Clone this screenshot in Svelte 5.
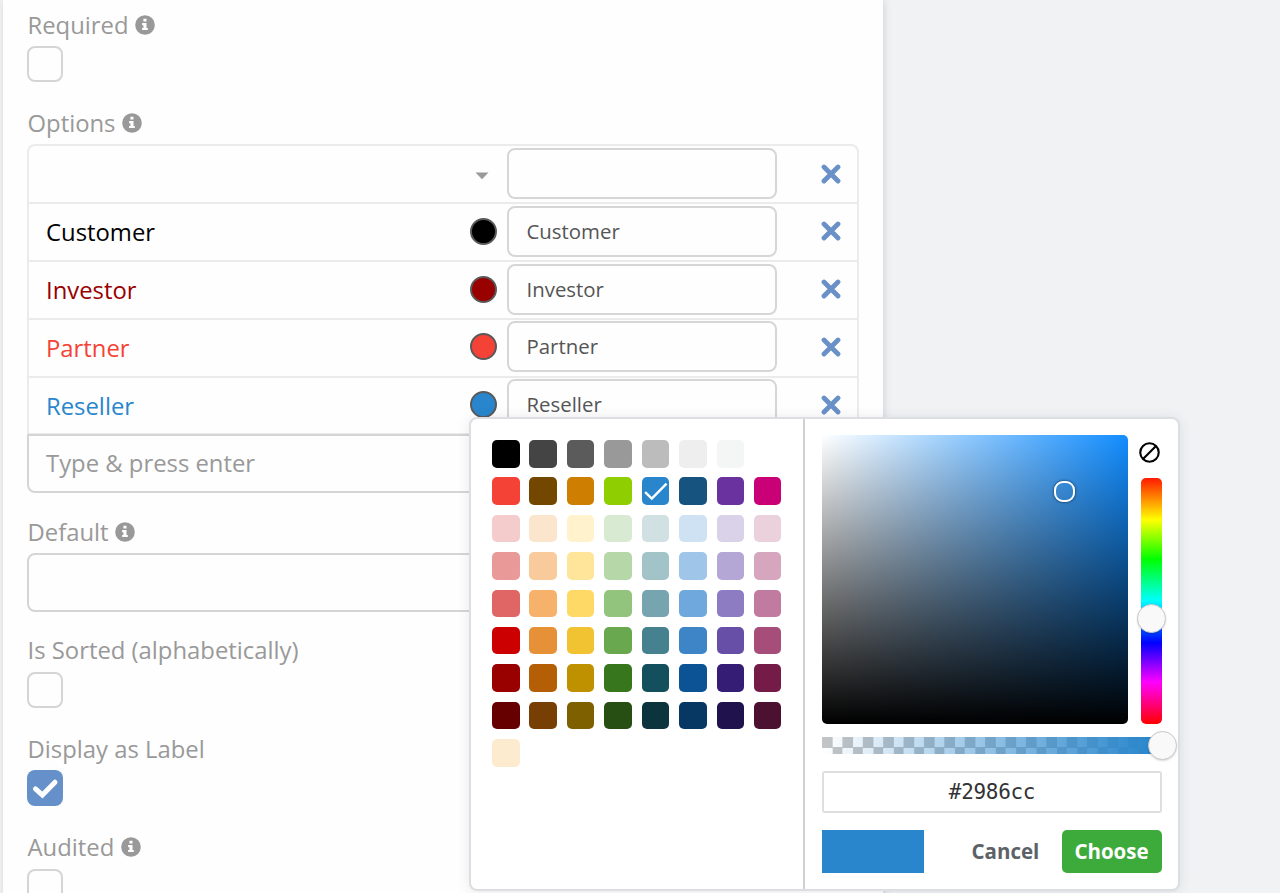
<script>
  const rows = [
    { name: 'Customer', color: '#000000' },
    { name: 'Investor', color: '#990000' },
    { name: 'Partner', color: '#f44336' },
    { name: 'Reseller', color: '#2986cc' }
  ];
  const palette = [
    '#000000', '#444444', '#5b5b5b', '#999999', '#bcbcbc', '#eeeeee', '#f3f6f4', '#ffffff',
    '#f44336', '#744700', '#ce7e00', '#8fce00', '#2986cc', '#16537e', '#6a329f', '#c90076',
    '#f4cccc', '#fce5cd', '#fff2cc', '#d9ead3', '#d0e0e3', '#cfe2f3', '#d9d2e9', '#ead1dc',
    '#ea9999', '#f9cb9c', '#ffe599', '#b6d7a8', '#a2c4c9', '#9fc5e8', '#b4a7d6', '#d5a6bd',
    '#e06666', '#f6b26b', '#ffd966', '#93c47d', '#76a5af', '#6fa8dc', '#8e7cc3', '#c27ba0',
    '#cc0000', '#e69138', '#f1c232', '#6aa84f', '#45818e', '#3d85c6', '#674ea7', '#a64d79',
    '#990000', '#b45f06', '#bf9000', '#38761d', '#134f5c', '#0b5394', '#351c75', '#741b47',
    '#660000', '#783f04', '#7f6000', '#274e13', '#0c343d', '#073763', '#20124d', '#4c1130',
    '#fdebd0'
  ];
  const selected = '#2986cc';
</script>

{#snippet info()}
  <svg class="info" viewBox="0 0 20 20">
    <circle cx="10" cy="10" r="9.8" fill="#999" />
    <path d="M8.4 3.7h3.1v2.9H8.4zM7.1 8.1h4.4v4.9h1.3v2.1H7.1V13h1.3v-2.8H7.1z" fill="#fff" />
  </svg>
{/snippet}

{#snippet remove()}
  <svg class="remove" viewBox="0 0 20 20">
    <path d="M3 3 17 17M17 3 3 17" stroke="#6990c7" stroke-width="4.8" stroke-linecap="round" />
  </svg>
{/snippet}

<div class="page">
  <main class="panel">
    <section class="field check">
      <div class="label">Required {@render info()}</div>
      <span class="checkbox"></span>
    </section>

    <section class="field">
      <div class="label">Options {@render info()}</div>
      <div class="options">
        <div class="row">
          <span class="name"></span>
          <span class="mark"><svg width="14" height="8" viewBox="0 0 14 8"><path d="M.5.5h13L7 7.2z" fill="#999" /></svg></span>
          <div class="value"></div>
          <span class="action">{@render remove()}</span>
        </div>
        {#each rows as row}
          <div class="row">
            <span class="name" style="color: {row.color}">{row.name}</span>
            <span class="mark"><i class="dot" style="background: {row.color}"></i></span>
            <div class="value">{row.name}</div>
            <span class="action">{@render remove()}</span>
          </div>
        {/each}
      </div>
      <div class="input add">Type &amp; press enter</div>
    </section>

    <section class="field last">
      <div class="label">Default {@render info()}</div>
      <div class="input"></div>
    </section>

    <section class="field check">
      <div class="label">Is Sorted (alphabetically)</div>
      <span class="checkbox"></span>
    </section>

    <section class="field check">
      <div class="label">Display as Label</div>
      <span class="checkbox on">
        <svg viewBox="0 0 36 36"><path d="M8.5 18.8 15.4 25 28 12.2" fill="none" stroke="#fff" stroke-width="5" stroke-linecap="round" /></svg>
      </span>
    </section>

    <section class="field check">
      <div class="label">Audited {@render info()}</div>
      <span class="checkbox"></span>
    </section>
  </main>

  <div class="picker">
    <div class="palette">
      {#each palette as color}
        <span class="swatch" style="background: {color}">
          {#if color === selected}
            <svg viewBox="0 0 28 28"><path d="M3.2 15.4 10 22 25 6.8" fill="none" stroke="#fff" stroke-width="2.5" /></svg>
          {/if}
        </span>
      {/each}
    </div>
    <div class="mixer">
      <div class="top">
        <div class="shade"><span class="ring"></span></div>
        <div class="side">
          <svg class="none" viewBox="0 0 20 20"><circle cx="10" cy="10" r="8.8" /><path d="M3.8 16.2 16.2 3.8" /></svg>
          <div class="hue"><span class="knob"></span></div>
        </div>
      </div>
      <div class="alpha"><span class="knob"></span></div>
      <div class="hex">#2986cc</div>
      <div class="buttons">
        <span class="preview"></span>
        <span class="cancel">Cancel</span>
        <span class="choose">Choose</span>
      </div>
    </div>
  </div>
</div>

<style>
  :global(body) { background: #f0f2f5; overflow: hidden; }
  .page, .page * { box-sizing: border-box; }
  .page {
    position: relative;
    width: 1280px;
    height: 893px;
    overflow: hidden;
    padding-left: 3px;
    background: linear-gradient(90deg, #f3f3f3 3px, #f0f2f4 3px);
    font-family: "Open Sans", sans-serif;
    font-size: 23.85px;
    color: #999;
  }
  .panel {
    width: 880px;
    height: 920px;
    padding: 7.6px 24px 0;
    background: #fefefe;
    box-shadow: 1px 0 8px rgba(0, 0, 0, .13);
  }
  .field { margin-bottom: 22.5px; }
  .check { margin-bottom: 24.4px; }
  .last { margin-bottom: 21.6px; }
  .label { display: flex; align-items: center; gap: 6.5px; height: 34px; margin-bottom: 4.4px; padding-left: .5px; margin-top: -.4px; white-space: nowrap; }
  .field:first-child .label { margin-top: 0; }
  .info { width: 20px; height: 20px; margin-top: 0; }
  .checkbox { display: block; width: 36px; height: 36px; border: 2px solid #d5d5d5; border-radius: 8px; background: #fefefe; }
  .on { border: 0; background: #6690c9; }
  .on svg { display: block; }
  .options { border: 2px solid #ebebeb; border-bottom: 0; border-radius: 8px 8px 0 0; height: 289.3px; }
  .row { display: flex; align-items: center; height: 57.8px; padding-bottom: 1.4px; border-bottom: 2px solid #ebebeb; }
  .name { width: 439px; padding: 2px 0 0 17px; }
  .mark { width: 39px; display: flex; justify-content: center; padding-right: 9px; }
  .row:first-child .mark { padding: 5px 11px 0 0; }
  .dot { width: 27px; height: 27px; border-radius: 50%; border: 2px solid #595959; margin-left: 1px; flex: none; }
  .value {
    width: 270px;
    height: 51px;
    border: 2px solid #d5d7d7;
    border-radius: 8px;
    padding: 1px 0 0 17.5px;
    line-height: 45.4px;
    font-size: 20.4px;
    color: #555;
  }
  .action { margin-left: 44px; display: flex; }
  .remove { width: 20px; height: 20px; }
  .input { height: 59px; border: 2px solid #d5d5d5; border-radius: 8px; padding-left: 17px; line-height: 55.4px; background: #fefefe; }
  .add { border-radius: 0 0 8px 8px; }

  .picker {
    position: absolute;
    left: 469px;
    top: 417px;
    width: 711px;
    height: 474px;
    display: flex;
    background: #fff;
    border: 2px solid #dcdee1;
    border-radius: 8px;
    box-shadow: 0 1px 14px rgba(0, 0, 60, .09);
  }
  .palette {
    width: 334px;
    padding: 21px 0 0 21px;
    border-right: 2px solid #d0d0d0;
    display: grid;
    grid-template-columns: repeat(8, 27.5px);
    grid-auto-rows: 27.5px;
    gap: 9.9px 9.93px;
  }
  .swatch { border-radius: 5px; }
  .swatch svg { display: block; }
  .mixer { width: 373px; padding: 16px 16px 0 17px; }
  .top { display: flex; justify-content: space-between; height: 289px; }
  .shade {
    position: relative;
    width: 306px;
    border-radius: 5px;
    background: linear-gradient(to top, #000, transparent), linear-gradient(to right, #fff, #128dff);
  }
  .ring {
    position: absolute;
    left: 232px;
    top: 46px;
    width: 21px;
    height: 21px;
    border: 2px solid #fff;
    border-radius: 9px;
    box-shadow: 0 0 3px rgba(0, 0, 0, .7);
  }
  .side { width: 21px; display: flex; flex-direction: column; justify-content: space-between; }
  .none { width: 21px; height: 21px; margin: 6.5px 0 0 -2px; fill: none; stroke: #000; stroke-width: 2; }
  .hue {
    position: relative;
    height: 246px;
    border-radius: 5px;
    background: linear-gradient(#ff1a00, #ff0 17%, #0f0 33%, #0ff 50%, #00f 67%, #f0f 83%, #f00);
  }
  .knob {
    position: absolute;
    width: 29px;
    height: 29px;
    border: 1px solid #c8c8c8;
    border-radius: 50%;
    background: #f9f9f9;
    box-shadow: 0 1px 2px rgba(0, 0, 0, .15);
  }
  .hue .knob { left: -4px; top: 126px; }
  .alpha {
    position: relative;
    height: 17px;
    margin-top: 13px;
    background:
      linear-gradient(to right, transparent, #2986cc 97%),
      conic-gradient(#fff 25%, #c4c4c4 0 50%, #fff 0 75%, #c4c4c4 0) 0 0 / 20.4px 21px;
  }
  .alpha .knob { right: -15px; top: -6px; }
  .hex {
    height: 42px;
    margin-top: 17px;
    border: 2px solid #dedede;
    border-radius: 3px;
    font: 21px/39px "DejaVu Sans Mono", monospace;
    letter-spacing: -.3px;
    text-align: center;
    color: #333;
  }
  .buttons { display: flex; align-items: center; height: 43px; margin-top: 16.5px; font-size: 20.5px; font-weight: 700; }
  .preview { width: 102px; height: 43px; background: #2986cc; }
  .cancel { width: 137.5px; padding: 0 0 1px 47.5px; color: #5c6268; }
  .choose { width: 100px; height: 43px; border-radius: 5px; background: #3dab3c; color: #fff; text-align: center; line-height: 43px; }
</style>
